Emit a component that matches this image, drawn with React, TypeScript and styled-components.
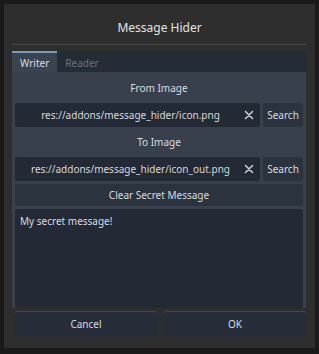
import React, {useState} from "react";
import styled, {createGlobalStyle} from "styled-components";

const Global = createGlobalStyle`
  html, body {
    margin: 0;
    padding: 0;
    background: #1a1a1a;
  }
  * { box-sizing: border-box; }
`

const Window = styled.div`
  width: 319px;
  height: 354px;
  background: #1a1a1a;
  padding: 4px 4px 6px 4px;
  font-family: "Noto Sans", "Open Sans", sans-serif;
  font-size: 10px;
  color: #d6d8db;
`

const Frame = styled.div`
  height: 100%;
  background: #2e2e2e;
  padding: 0 8px 0 8px;
  display: flex;
  flex-direction: column;
`

const Title = styled.div`
  height: 41px;
  display: flex;
  align-items: center;
  justify-content: center;
  padding-top: 6px;
  font-size: 12px;
  color: #e4e4e4;
  border-bottom: 1px solid #484848;
`

const Tabs = styled.div`
  margin-top: 6px;
  width: 294px;
  display: flex;
  background: #262c36;
  height: 21px;
`

const Tab = styled.div<{ $active?: boolean }>`
  padding: 0 8px;
  display: flex;
  align-items: center;
  color: ${p => p.$active ? "#d8dce2" : "#69717d"};
  background: ${p => p.$active ? "#3a4350" : "transparent"};
  border-top: 2px solid ${p => p.$active ? "#7d9cbc" : "transparent"};
  cursor: pointer;
`

const Panel = styled.div`
  width: 294px;
  background: #37404c;
  padding: 4px 3px 0 3px;
  display: flex;
  flex-direction: column;
  gap: 3px;
`

const Label = styled.div`
  height: 24px;
  display: flex;
  align-items: center;
  justify-content: center;
  color: #d9dce0;
`

const Row = styled.div`
  display: flex;
  gap: 3px;
  height: 24px;
`

const LineEdit = styled.div`
  flex: 1;
  min-width: 0;
  background: #232a35;
  display: flex;
  align-items: center;
  padding: 0 6px 0 6px;
  border-radius: 2px;
`

const Path = styled.span`
  flex: 1;
  min-width: 0;
  text-align: center;
  white-space: nowrap;
  overflow: hidden;
`

const ClearIcon = styled.svg`
  width: 10px;
  height: 10px;
  margin-left: 4px;
  flex: none;
`

const Button = styled.button`
  font: inherit;
  color: #d9dce0;
  background: #2b333f;
  border: none;
  border-radius: 2px;
  padding: 0 4px;
  height: 100%;
  width: 40px;
  flex: none;
`

const WideButton = styled(Button)`
  height: 22px;
  width: 100%;
`

const TextArea = styled.div`
  height: 99px;
  background: #232a35;
  padding: 5px 5px;
  color: #d9dce0;
  border-radius: 2px;
`

const Footer = styled.div`
  display: flex;
  gap: 7px;
  padding: 3px 1px 0 3px;
  height: 29px;
`

const FooterButton = styled.button`
  flex: 1;
  font: inherit;
  color: #d9dce0;
  background: #262d38;
  border: none;
  border-radius: 2px;
  box-shadow: inset 0 1px 0 #3e4753;
`

function Clear() {
    return (
        <ClearIcon viewBox="0 0 10 10">
            <path d="M1.5 1.5 L8.5 8.5 M8.5 1.5 L1.5 8.5" stroke="#cfd3d8" strokeWidth="1.5" strokeLinecap="round"/>
        </ClearIcon>
    )
}

export default function App() {
    const [tab, setTab] = useState<'writer' | 'reader'>('writer')
    return (
        <Window>
            <Global/>
            <Frame>
                <Title>Message Hider</Title>
                <Tabs>
                    <Tab $active={tab === 'writer'} onClick={() => setTab('writer')}>Writer</Tab>
                    <Tab $active={tab === 'reader'} onClick={() => setTab('reader')}>Reader</Tab>
                </Tabs>
                <Panel>
                    <Label>From Image</Label>
                    <Row>
                        <LineEdit>
                            <Path>res://addons/message_hider/icon.png</Path>
                            <Clear/>
                        </LineEdit>
                        <Button>Search</Button>
                    </Row>
                    <Label>To Image</Label>
                    <Row>
                        <LineEdit>
                            <Path>res://addons/message_hider/icon_out.png</Path>
                            <Clear/>
                        </LineEdit>
                        <Button>Search</Button>
                    </Row>
                    <WideButton>Clear Secret Message</WideButton>
                    <TextArea>My secret message!</TextArea>
                </Panel>
                <Footer>
                    <FooterButton>Cancel</FooterButton>
                    <FooterButton>OK</FooterButton>
                </Footer>
            </Frame>
        </Window>
    );
}
